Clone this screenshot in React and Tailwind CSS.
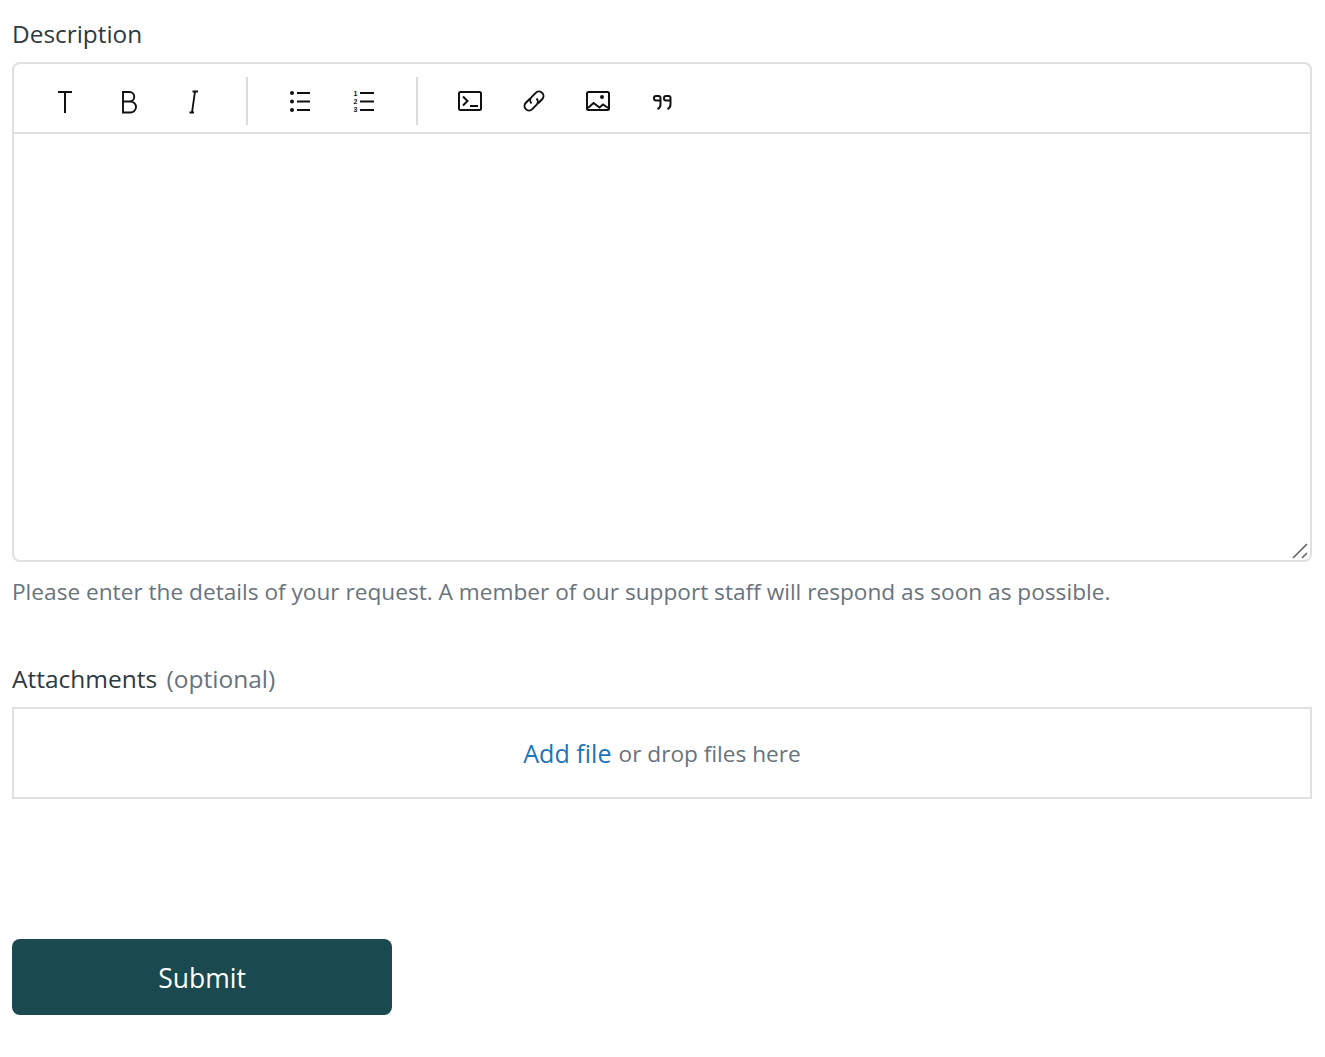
const ToolIcon = ({ children }) => (
  <button type="button" className="flex h-10 w-16 items-center justify-center text-[#111]">
    <svg width="24" height="24" viewBox="0 0 24 24" fill="none" stroke="currentColor" strokeWidth="2" className="overflow-visible" aria-hidden="true">
      {children}
    </svg>
  </button>
);

function Toolbar() {
  return (
    <div className="flex h-[70px] items-center border-b-2 border-[#e0e0e0] pl-[19px] pt-[6px]">
      <ToolIcon>
        <path d="M5 3h14M12 3v21" strokeWidth="2" />
      </ToolIcon>
      <ToolIcon>
        <path d="M6 3h6.500a4.700 4.700 0 0 1 0 9.500H6zM6 12.500h7.500a5.500 5.500 0 0 1 0 11H6z" strokeWidth="1.900" />
      </ToolIcon>
      <ToolIcon>
        <path d="M8.500 23.500h4.500M11 23.500l3-21M11.500 2.500h5.500" strokeWidth="1.800" />
      </ToolIcon>
      <div className="ml-[21px] mr-[20px] h-12 w-0.5 bg-[#d8dcde]" />
      <ToolIcon>
        <circle cx="4" cy="4" r="2" fill="currentColor" stroke="none" />
        <circle cx="4" cy="12.500" r="2" fill="currentColor" stroke="none" />
        <circle cx="4" cy="21" r="2" fill="currentColor" stroke="none" />
        <path d="M9 4h13M9 12.500h13M9 21h13" />
      </ToolIcon>
      <ToolIcon>
        <text x="3.500" y="6.500" fontSize="7" fontWeight="700" textAnchor="middle" fill="currentColor" stroke="none" fontFamily="Liberation Sans, sans-serif">1</text>
        <text x="3.500" y="14.500" fontSize="7" fontWeight="700" textAnchor="middle" fill="currentColor" stroke="none" fontFamily="Liberation Sans, sans-serif">2</text>
        <text x="3.500" y="23" fontSize="7" fontWeight="700" textAnchor="middle" fill="currentColor" stroke="none" fontFamily="Liberation Sans, sans-serif">3</text>
        <path d="M8 4h14M8 12.500h14M8 21h14" />
      </ToolIcon>
      <div className="ml-[20px] mr-[20px] h-12 w-0.5 bg-[#d8dcde]" />
      <ToolIcon>
        <rect x="1" y="3" width="22" height="18" rx="1.500" />
        <path d="M5 7.500l4.500 4.500L5 16.500M12 17h8" strokeWidth="2" />
      </ToolIcon>
      <ToolIcon>
        <g transform="rotate(-45 12 12)">
          <path d="M11 7.500H5a4.500 4.500 0 0 0 0 9h6a4.500 4.500 0 0 0 4.500-4.500" />
          <path d="M13 16.500h6a4.500 4.500 0 0 0 0-9h-6A4.500 4.500 0 0 0 8.500 12" />
        </g>
      </ToolIcon>
      <ToolIcon>
        <rect x="1" y="3" width="22" height="18" rx="1.500" />
        <circle cx="16" cy="8" r="2" fill="currentColor" stroke="none" />
        <path d="M2 19l5.500-5 6 4.500 3.500-3 6 4" />
      </ToolIcon>
      <ToolIcon>
        <path d="M10.500 11.500H6a2 2 0 0 1-2-2V9a2 2 0 0 1 2-2h2.500a2 2 0 0 1 2 2v6.500c0 2-1 3.500-3 4.500" />
        <path d="M20.500 11.500H16a2 2 0 0 1-2-2V9a2 2 0 0 1 2-2h2.500a2 2 0 0 1 2 2v6.500c0 2-1 3.500-3 4.500" />
      </ToolIcon>
    </div>
  );
}

function ResizeGrip() {
  return (
    <svg className="absolute bottom-0 right-0" width="20" height="18" viewBox="0 0 20 18" fill="none" stroke="#666" strokeWidth="1.700" aria-hidden="true">
      <path d="M3 16L17 2M12 16l5-5" />
    </svg>
  );
}

export default function App() {
  return (
    <div className="min-h-[1057px] bg-white pl-3 pr-[13px] pt-[16px] font-['Open_Sans','Noto_Sans',sans-serif] text-[#2f3941]">
      <label className="block text-[24.400px] leading-9">Description</label>
      <div className="mt-[10px] overflow-hidden rounded-lg border-2 border-[#e0e0e0]">
        <Toolbar />
        <div className="relative h-[426px]">
          <ResizeGrip />
        </div>
      </div>
      <p className="mt-[12px] text-[22.650px] leading-9 text-[#68737d]">
        Please enter the details of your request. A member of our support staff will respond as soon as possible.
      </p>
      <label className="mt-[51px] block text-[24.500px] leading-9">
        Attachments <span className="ml-[3px] text-[#68737d]">(optional)</span>
      </label>
      <div className="mt-[10px] flex h-[92px] items-center justify-center border-2 border-[#e0e0e0] pt-[2px] text-[22.650px] text-[#68737d]">
        <a href="#" className="text-[25.100px] text-[#1f73b7]">Add file</a>
        <span className="ml-[7px]">or drop files here</span>
      </div>
      <button type="button" className="mt-[140px] h-[76px] w-[380px] rounded-lg bg-[#1a4a4f] pt-1 text-[26.500px] text-white">
        Submit
      </button>
    </div>
  );
}
